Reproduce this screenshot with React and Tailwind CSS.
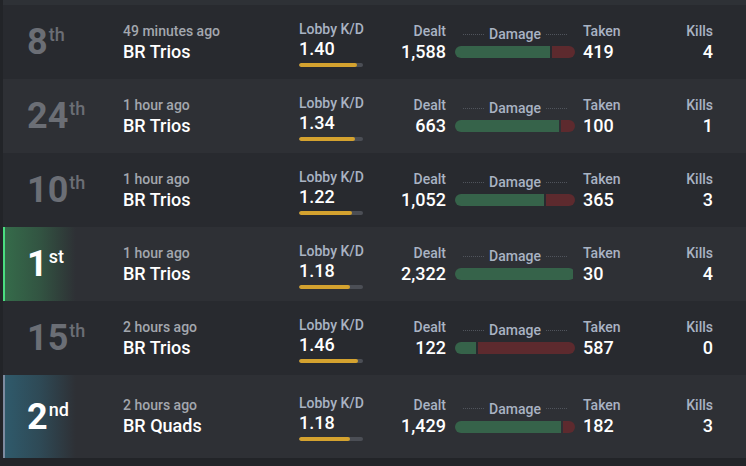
import React from 'react';

const matches = [
  { place: 8, suffix: 'th', time: '49 minutes ago', mode: 'BR Trios', kd: '1.40', kdFill: 58, dealt: 1588, taken: 419, kills: 4 },
  { place: 24, suffix: 'th', time: '1 hour ago', mode: 'BR Trios', kd: '1.34', kdFill: 56, dealt: 663, taken: 100, kills: 1 },
  { place: 10, suffix: 'th', time: '1 hour ago', mode: 'BR Trios', kd: '1.22', kdFill: 53, dealt: 1052, taken: 365, kills: 3 },
  { place: 1, suffix: 'st', time: '1 hour ago', mode: 'BR Trios', kd: '1.18', kdFill: 51, dealt: 2322, taken: 30, kills: 4, highlight: 'win' },
  { place: 15, suffix: 'th', time: '2 hours ago', mode: 'BR Trios', kd: '1.46', kdFill: 59, dealt: 122, taken: 587, kills: 0 },
  { place: 2, suffix: 'nd', time: '2 hours ago', mode: 'BR Quads', kd: '1.18', kdFill: 51, dealt: 1429, taken: 182, kills: 3, highlight: 'second' },
];

const fmt = (n) => n.toLocaleString('en-US');

const Placement = ({ m }) => {
  let cls = 'w-[120px] h-full flex items-center pl-[24px] text-[#6b6e75]';
  if (m.highlight === 'win') {
    cls = 'w-[120px] h-full flex items-center pl-[22px] text-white border-l-2 border-[#4ade80] bg-linear-to-r from-[#356b4a] via-[#356b4a]/60 via-30% to-transparent to-60%';
  } else if (m.highlight === 'second') {
    cls = 'w-[120px] h-full flex items-center pl-[22px] text-white border-l-2 border-[#7d8ba0] bg-linear-to-r from-[#2f5a6b] via-[#2f5a6b]/60 via-30% to-transparent to-60%';
  }
  return (
    <div className={cls}>
      <div className="flex items-start">
        <span className="text-[36px] leading-[36px] font-bold">{m.place}</span>
        <span className="text-[18px] leading-[18px] font-medium mt-[2px] ml-[1px]">{m.suffix}</span>
      </div>
    </div>
  );
};

const Row = ({ m, alt, last }) => {
  const pct = (m.dealt / (m.dealt + m.taken)) * 100;
  return (
    <div className={`flex items-center whitespace-nowrap ${last ? 'h-[83px]' : 'h-[74px]'} ${alt ? 'bg-[#2e3035]' : 'bg-[#282a2f]'}`}>
      <Placement m={m} />

      <div className="w-[176px] flex flex-col">
        <span className="text-[14px] leading-[16px] font-medium text-[#a3a7ae]">{m.time}</span>
        <span className="text-[18px] leading-[20px] font-medium text-white mt-[3px]">{m.mode}</span>
      </div>

      <div className="w-[64px] flex flex-col mt-[3px]">
        <span className="text-[14px] leading-[16px] font-medium text-[#a9b3c3]">Lobby K/D</span>
        <span className="text-[18px] leading-[20px] font-medium text-white mt-[2px]">{m.kd}</span>
        <div className="h-[4px] w-[64px] rounded-full bg-[#4b4e55] mt-[4px] overflow-hidden">
          <div className="h-full rounded-full bg-[#d4a22f]" style={{ width: `${m.kdFill}px` }} />
        </div>
      </div>

      <div className="w-[83px] flex flex-col items-end">
        <span className="text-[14px] leading-[16px] font-medium text-[#a9b3c3]">Dealt</span>
        <span className="text-[18px] leading-[20px] font-medium text-white mt-[3px]">{fmt(m.dealt)}</span>
      </div>

      <div className="w-[120px] ml-[9px] flex flex-col">
        <div className="flex items-center gap-[5px] px-[8px]">
          <div className="flex-1 border-t border-dotted border-[#50545c]" />
          <span className="text-[14px] leading-[16px] font-medium text-[#a9b3c3]">Damage</span>
          <div className="flex-1 border-t border-dotted border-[#50545c]" />
        </div>
        <div className="h-[12px] mt-[4px] rounded-full overflow-hidden flex gap-[2px]">
          <div className="h-full bg-[#36634a]" style={{ width: `${pct}%` }} />
          <div className="h-full flex-1 bg-[#5d2a2e]" />
        </div>
      </div>

      <div className="w-[80px] ml-[8px] flex flex-col items-start">
        <span className="text-[14px] leading-[16px] font-medium text-[#a9b3c3]">Taken</span>
        <span className="text-[18px] leading-[20px] font-medium text-white mt-[3px]">{fmt(m.taken)}</span>
      </div>

      <div className="w-[50px] flex flex-col items-end">
        <span className="text-[14px] leading-[16px] font-medium text-[#a9b3c3]">Kills</span>
        <span className="text-[18px] leading-[20px] font-medium text-white mt-[3px]">{m.kills}</span>
      </div>
    </div>
  );
};

export default function App() {
  return (
    <div className="w-[746px] h-[466px] overflow-hidden bg-[#222428]" style={{ fontFamily: 'Roboto, "Noto Sans", sans-serif' }}>
      <div className="ml-[3px] flex flex-col">
        <div className="h-[5px] bg-[#2e3136]" />
        {matches.map((m, i) => (
          <Row key={i} m={m} alt={i % 2 === 1} last={i === matches.length - 1} />
        ))}
      </div>
    </div>
  );
}
